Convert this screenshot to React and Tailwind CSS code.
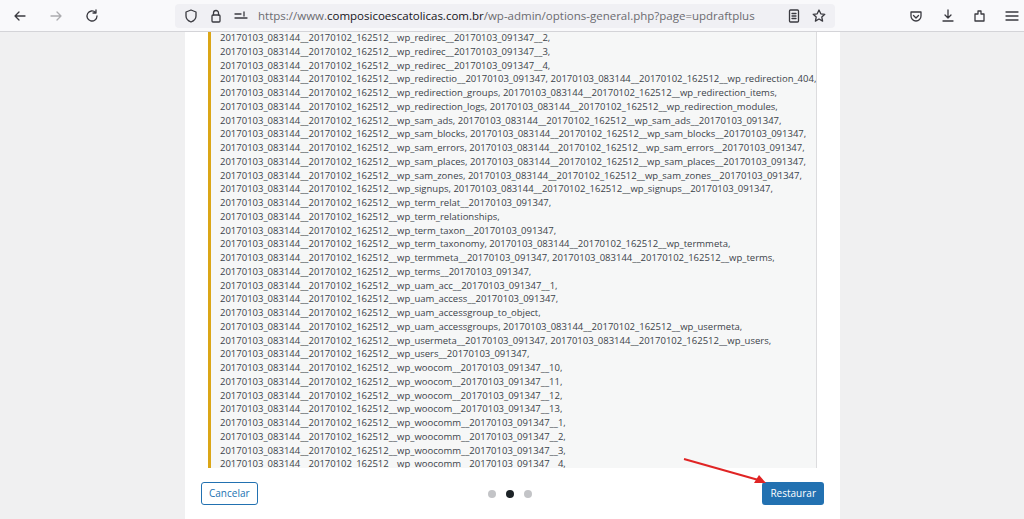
import React from "react";

const P = "20170103_083144__20170102_162512__wp_";
const lines = [
  P + "redirec__20170103_091347__2,",
  P + "redirec__20170103_091347__3,",
  P + "redirec__20170103_091347__4,",
  P + "redirectio__20170103_091347, " + P + "redirection_404,",
  P + "redirection_groups, " + P + "redirection_items,",
  P + "redirection_logs, " + P + "redirection_modules,",
  P + "sam_ads, " + P + "sam_ads__20170103_091347,",
  P + "sam_blocks, " + P + "sam_blocks__20170103_091347,",
  P + "sam_errors, " + P + "sam_errors__20170103_091347,",
  P + "sam_places, " + P + "sam_places__20170103_091347,",
  P + "sam_zones, " + P + "sam_zones__20170103_091347,",
  P + "signups, " + P + "signups__20170103_091347,",
  P + "term_relat__20170103_091347,",
  P + "term_relationships,",
  P + "term_taxon__20170103_091347,",
  P + "term_taxonomy, " + P + "termmeta,",
  P + "termmeta__20170103_091347, " + P + "terms,",
  P + "terms__20170103_091347,",
  P + "uam_acc__20170103_091347__1,",
  P + "uam_access__20170103_091347,",
  P + "uam_accessgroup_to_object,",
  P + "uam_accessgroups, " + P + "usermeta,",
  P + "usermeta__20170103_091347, " + P + "users,",
  P + "users__20170103_091347,",
  P + "woocom__20170103_091347__10,",
  P + "woocom__20170103_091347__11,",
  P + "woocom__20170103_091347__12,",
  P + "woocom__20170103_091347__13,",
  P + "woocomm__20170103_091347__1,",
  P + "woocomm__20170103_091347__2,",
  P + "woocomm__20170103_091347__3,",
  P + "woocomm__20170103_091347__4,",
];

const Ico = ({ children, cls = "" }) => (
  <svg width="16" height="16" viewBox="0 0 16 16" fill="none" stroke="#3a3a40" strokeWidth="1.3" strokeLinecap="round" strokeLinejoin="round" className={cls}>{children}</svg>
);

export default function App() {
  return (
    <div className="w-[1024px] h-[519px] overflow-hidden flex flex-col bg-[#f0f0f1]" style={{ fontFamily: '"Open Sans", sans-serif' }}>
      <div className="h-[32px] shrink-0 bg-[#f9f9fb] border-b border-[#d4d4d8] flex items-center relative z-10">
        <div className="flex items-center gap-[20px] pl-[12px] w-[175px]">
          <Ico><path d="M13 8H3M7 4L3 8l4 4" /></Ico>
          <Ico cls="opacity-40"><path d="M3 8h10M9 4l4 4-4 4" /></Ico>
          <Ico><path d="M13 8a5 5 0 1 1-1.5-3.6M12 2v3H9" /></Ico>
        </div>
        <div className="w-[660px] h-[24px] rounded bg-[#f0f0f4] flex items-center px-[8px] gap-[9px]">
          <Ico><path d="M8 2l5 2v4c0 3-2.5 5-5 6-2.5-1-5-3-5-6V4z" /></Ico>
          <Ico><rect x="4" y="7" width="8" height="7" rx="1" /><path d="M5.5 7V5a2.5 2.5 0 0 1 5 0v2" /></Ico>
          <Ico><path d="M2 6h6M2 10h12M11 4v4" /></Ico>
          <span className="text-[11.5px] text-[#6b6b70] flex-1 leading-none">https://www.<span className="text-[#15141a]">composicoescatolicas.com.br</span>/wp-admin/options-general.php?page=updraftplus</span>
          <Ico><rect x="3.5" y="2" width="9" height="12" rx="1" /><path d="M6 5.5h4M6 8h4M6 10.5h4" /></Ico>
          <Ico><path d="M8 2l1.8 3.8 4 .5-3 2.8.8 4L8 11l-3.6 2.1.8-4-3-2.8 4-.5z" /></Ico>
        </div>
        <div className="flex-1 flex justify-end items-center gap-[16px] pr-[4px]">
          <Ico><path d="M3 4h10v4a5 5 0 0 1-10 0z M5.5 7.5L8 10l2.5-2.5" /></Ico>
          <Ico><path d="M8 2v8M5 7l3 3 3-3M3 13h10" /></Ico>
          <Ico><path d="M6 3h3v3h3v7H3V6h3z" /></Ico>
          <Ico><path d="M2 4h12M2 8h12M2 12h12" /></Ico>
        </div>
      </div>
      <div className="flex-1 flex min-h-0">
        <div className="w-[185px]" />
        <div className="w-[655px] bg-white flex flex-col">
          <div className="h-[436px] px-[23px] overflow-hidden">
            <div className="h-full bg-[#f6f7f7] border-l-[3px] border-[#dba617] border-r border-r-[#dcdcde] pl-[9px] overflow-hidden">
              <div className="-mt-[1px] text-[9.5px] leading-[13.75px] text-[#3c434a] whitespace-nowrap">
                {lines.map((l, i) => <div key={i}>{l}</div>)}
              </div>
            </div>
          </div>
          <div className="flex-1 flex items-center justify-between px-[16px] relative">
            <button className="h-[23px] px-[7px] border border-[#2271b1] rounded-[3px] text-[#2271b1] text-[10px] bg-white">Cancelar</button>
            <div className="flex gap-[10px] items-center">
              <span className="w-[8px] h-[8px] rounded-full bg-[#c3c4c7]" />
              <span className="w-[8px] h-[8px] rounded-full bg-[#1d2327]" />
              <span className="w-[8px] h-[8px] rounded-full bg-[#c3c4c7]" />
            </div>
            <button className="h-[23px] px-[8px] rounded-[3px] bg-[#2271b1] text-white text-[10px]">Restaurar</button>
            <svg className="absolute left-[495px] top-[-11px]" width="95" height="30" viewBox="0 0 95 30">
              <path d="M4 2L82 24" stroke="#e02424" strokeWidth="2" />
              <path d="M86 26L74 26L79 18z" fill="#e02424" />
            </svg>
          </div>
        </div>
      </div>
    </div>
  );
}
